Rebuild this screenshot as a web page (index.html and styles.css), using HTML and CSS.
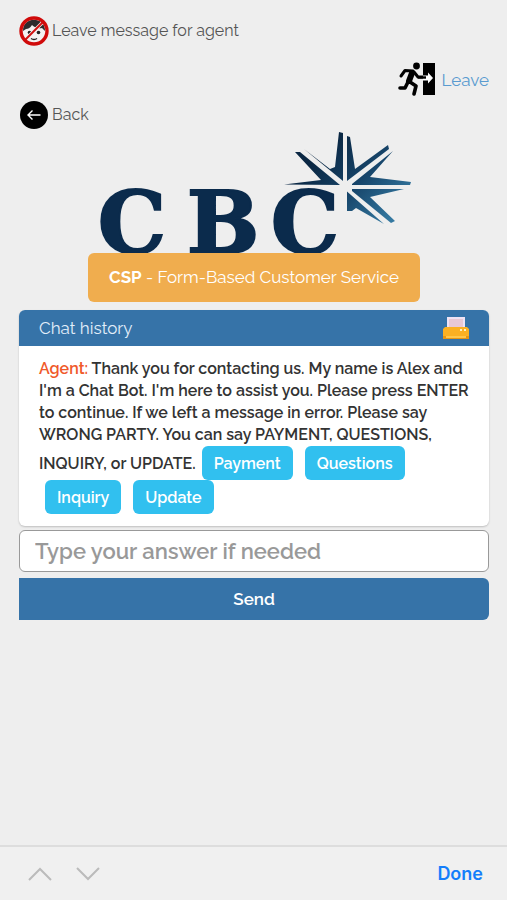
FILE: index.html
```html
<!DOCTYPE html>
<html lang="en">
<head>
    <meta charset="UTF-8">
    <meta name="viewport" content="width=device-width, initial-scale=1.0">
    <title>CSP - Form-Based Customer Service</title>
    <link rel="stylesheet" href="styles.css">
</head>
<body>
    <main class="container">
        <a class="nav-link" href="#message">
            <svg class="agent-icon" viewBox="0 0 30 30" aria-hidden="true">
                <circle cx="15" cy="15" r="13.3" fill="#f4f1f1"/>
                <path d="M4 15C4 7 10 3 17 4c6 1 9 5 9 11l-3-3c-4 1-8-1-10-3-2 3-4 4-6 4z" fill="#2d2a2c"/>
                <circle cx="10.5" cy="16.5" r="1.8" fill="#222"/>
                <circle cx="19.5" cy="16.5" r="1.8" fill="#222"/>
                <path d="M12 22.5q3 2 6 0" fill="none" stroke="#222" stroke-width="1.5"/>
                <path d="M6 24 24 6" stroke="#f4f1f1" stroke-width="3.4"/>
                <path d="M6 24 24 6" stroke="#d01010" stroke-width="2"/>
                <circle cx="15" cy="15" r="13" fill="none" stroke="#d00a0a" stroke-width="3.4"/>
            </svg>
            Leave message for agent
        </a>
        <a class="nav-link leave" href="#leave">
            <svg class="leave-icon" viewBox="0 0 38 36" aria-hidden="true">
                <path d="M25 1h12v32H25z"/>
                <circle cx="18.5" cy="4" r="3.4"/>
                <g fill="none" stroke="#000" stroke-linecap="round" stroke-linejoin="round">
                    <path d="M14 11 11 19" stroke-width="6"/>
                    <path d="M15 9 7 8.5 3 14" stroke-width="3"/>
                    <path d="m16 10 4 5h8" stroke-width="3"/>
                    <path d="m12 20 6 4-2 8" stroke-width="3.6"/>
                    <path d="m10 20-3 6H2" stroke-width="3.6"/>
                </g>
                <path d="M25 13.5h5v-3l5 5.5-5 5.5v-3h-5z" fill="#fff"/>
                <path d="M20 15.5h8" stroke="#000" stroke-width="2.4"/>
            </svg>
            Leave
        </a>
        <a class="nav-link" href="#back">
            <svg class="back-icon" viewBox="0 0 30 30" aria-hidden="true">
                <circle cx="15" cy="15" r="14"/>
                <path d="M21.5 15H9M13.5 10.5 9 15l4.5 4.5" fill="none" stroke="#fff" stroke-width="1.4"/>
            </svg>
            Back
        </a>

        <svg class="logo" viewBox="0 0 320 122" role="img" aria-label="CBC">
            <defs>
                <linearGradient id="star" gradientUnits="userSpaceOnUse" x1="220" y1="30" x2="290" y2="95">
                    <stop offset="0" stop-color="#0a2743"/>
                    <stop offset="0.5" stop-color="#17456a"/>
                    <stop offset="1" stop-color="#3478a0"/>
                </linearGradient>
            </defs>
            <g class="logo-text">
                <text x="38" y="122">C</text>
                <text x="129" y="122">B</text>
                <text x="211" y="122">C</text>
            </g>
            <g fill="url(#star)">
                <path d="M210 18 236 38 241 36 245 1 249 2V50z"/>
                <path d="M253 50V5l3 1 5 32 33-24 1 4z"/>
                <path d="M258 53 299 20 276 46 317 51 316 54H258z"/>
                <path d="M258 58H310L276 66 301 90 297 92 258 60z"/>
                <path d="M253 60.5 290 93 262 77 258 80H253z"/>
                <path d="M190 53.5 227 49 201 21H206L246 54z"/>
            </g>
        </svg>

        <button class="service-button" type="button"><b>CSP</b> - Form-Based Customer Service</button>

        <section class="chat">
            <header class="chat-header">
                <h1>Chat history</h1>
                <button class="print-button" type="button" aria-label="Print">
                    <svg viewBox="0 0 28 24" aria-hidden="true">
                        <path d="M5 1h18v12H5z" fill="#eee3f4"/>
                        <path d="M7 3h14v9H7z" fill="#e8c8d5"/>
                        <path d="M3 11h22l2 2v9H1v-9z" fill="#fbb022"/>
                        <path d="M1 20h26v3H1z" fill="#e89512"/>
                        <path d="M4 20h20v2H4z" fill="#ffc64a"/>
                        <path d="M18 13h2v2h-2zM22 13h2v2h-2z" fill="#fff0bf"/>
                    </svg>
                </button>
            </header>
            <div class="chat-body">
                <span class="sender">Agent:</span> Thank you for contacting us. My name is Alex and I'm a Chat Bot. I'm here to assist you. Please press ENTER to continue. If we left a message in error. Please say WRONG PARTY. You can say PAYMENT, QUESTIONS, INQUIRY, or UPDATE.<button class="option" type="button">Payment</button>
                <button class="option" type="button">Questions</button>
                <button class="option" type="button">Inquiry</button>
                <button class="option" type="button">Update</button>
            </div>
        </section>

        <form class="answer-form">
            <input type="text" name="answer" aria-label="Your answer" placeholder="Type your answer if needed">
            <button class="send-button" type="submit">Send</button>
        </form>
    </main>

    <footer class="toolbar">
        <button type="button" aria-label="Previous field">
            <svg viewBox="0 0 24 14" aria-hidden="true"><path d="M1 13 12 2l11 11"/></svg>
        </button>
        <button type="button" aria-label="Next field">
            <svg viewBox="0 0 24 14" aria-hidden="true"><path d="m1 1 11 11L23 1"/></svg>
        </button>
        <button class="done" type="button">Done</button>
    </footer>
</body>
</html>
```
FILE: styles.css
```css
* {
    box-sizing: border-box;
}

body {
    display: flex;
    flex-direction: column;
    min-height: 100vh;
    margin: 0;
    background-color: #eee;
    color: #333;
    font-family: Raleway, Lato, sans-serif;
    font-size: 16px;
    line-height: 22px;
}

button,
input {
    font-family: inherit;
}

button {
    border: none;
    cursor: pointer;
}

svg {
    display: block;
}

.container {
    display: flex;
    flex-direction: column;
    flex: 1;
    padding: 16px 18px 16px 19px;
}

.nav-link {
    display: flex;
    align-items: center;
    align-self: flex-start;
    gap: 3px;
    height: 30px;
    color: #555;
    text-decoration: none;
}

.agent-icon,
.back-icon {
    width: 30px;
    height: 30px;
}

.leave {
    align-self: flex-end;
    gap: 6px;
    height: 36px;
    margin: 16px 0 2px;
    color: #5a9bd0;
    font-size: 17px;
}

.leave-icon {
    width: 38px;
    height: 36px;
}

.logo {
    align-self: center;
    width: 320px;
    height: 122px;
    margin-top: 1px;
    overflow: visible;
}

.logo-text {
    fill: #0b2b4c;
    stroke: #0b2b4c;
    stroke-width: 2;
    font-family: "DejaVu Serif", serif;
    font-size: 86px;
    font-weight: bold;
    text-anchor: middle;
}

.service-button {
    align-self: center;
    padding: 14px 21px;
    border-radius: 6px;
    background-color: #f0ad4e;
    color: #fff;
    font-size: 17px;
    line-height: 21px;
}

.chat {
    margin-top: 8px;
    border-radius: 6px;
    background-color: #fff;
    box-shadow: 0 1px 2px rgba(0, 0, 0, 0.2);
}

.chat-header {
    display: flex;
    align-items: center;
    justify-content: space-between;
    height: 36px;
    padding: 0 19px 0 20px;
    border-radius: 6px 6px 0 0;
    background-color: #3673a8;
    color: #e2eefa;
}

.chat-header h1 {
    margin: 0;
    font-size: 17px;
    font-weight: 400;
}

.print-button {
    padding: 0;
    background: none;
}

.print-button svg {
    width: 28px;
    height: 24px;
}

.chat-body {
    padding: 12px 19px 12px 20px;
    font-weight: 600;
}

.sender {
    color: #f0592a;
}

.option {
    height: 34px;
    margin: 0 2px 0 6px;
    padding: 0 12px;
    border-radius: 6px;
    background-color: #31c0ef;
    color: #fff;
    font-size: 16px;
    font-weight: 600;
}

.answer-form {
    display: flex;
    flex-direction: column;
    gap: 6px;
    margin-top: 4px;
}

.answer-form input {
    height: 42px;
    padding: 0 15px;
    border: 1px solid #999;
    border-radius: 6px;
    background-color: #fff;
    font-size: 22px;
    font-weight: 600;
}

.answer-form input::placeholder {
    color: #999;
}

.send-button {
    height: 42px;
    border-radius: 0 6px 6px 0;
    background-color: #3673a8;
    color: #fff;
    font-size: 17px;
    font-weight: 600;
}

.toolbar {
    display: flex;
    align-items: center;
    gap: 24px;
    height: 55px;
    padding: 0 24px 0 28px;
    border-top: 2px solid #ddd;
    background-color: #f0f0f0;
}

.toolbar button {
    padding: 0;
    background: none;
}

.toolbar svg {
    width: 24px;
    height: 14px;
    fill: none;
    stroke: #bbb;
    stroke-width: 2;
}

.toolbar .done {
    margin-left: auto;
    color: #147efb;
    font-family: Inter, sans-serif;
    font-size: 18px;
    font-weight: 600;
}
```
